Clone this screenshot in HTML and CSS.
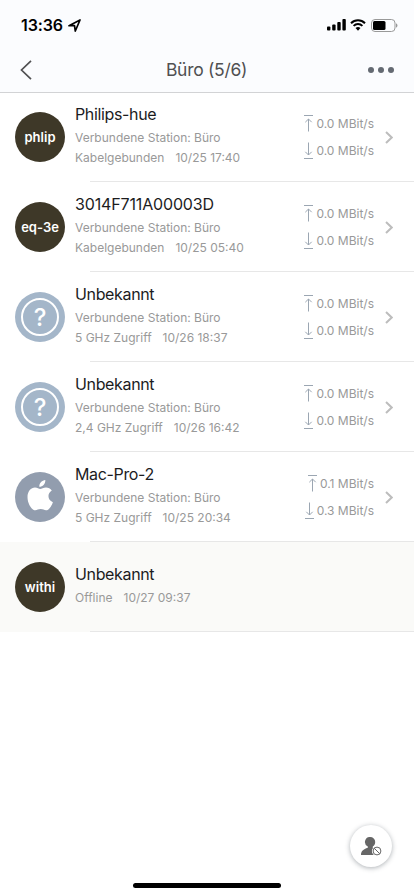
FILE: index.html
```html
<!DOCTYPE html>
<html lang="de">
<head>
<meta charset="utf-8">
<meta name="viewport" content="width=device-width, initial-scale=1">
<title>Büro</title>
<link rel="stylesheet" href="styles.css">
</head>
<body>
<svg class="defs" aria-hidden="true">
  <symbol id="up" viewBox="0 0 9 17"><path d="M0 .5h9M4.500 16.500V4M1.300 7.200l3.200-3.200 3.200 3.200"/></symbol>
  <symbol id="down" viewBox="0 0 9 17"><path d="M0 16.500h9M4.500 .5v12.500M1.300 9.800l3.200 3.200 3.200-3.200"/></symbol>
  <symbol id="chevron" viewBox="0 0 8 13"><path d="M1 1l5.700 5.500L1 12"/></symbol>
</svg>
<div class="screen">
  <header class="header">
    <div class="status">
      <span class="time">13:36</span>
      <svg class="location" viewBox="0 0 13 13"><path d="M1 6.700L12 1 7.300 12 6.500 6.700z"/></svg>
      <svg class="signal" viewBox="0 0 19 12"><rect x="0" y="7.500" width="3.400" height="4" rx=".9"/><rect x="5.200" y="5.500" width="3.400" height="6" rx=".9"/><rect x="10.300" y="3" width="3.400" height="8.500" rx=".9"/><rect x="15.400" y="0" width="3.400" height="11.500" rx=".9"/></svg>
      <svg class="wifi" viewBox="0 0 16 12"><path d="M1 4.200a10 10 0 0 1 14 0M3.600 6.900a6.300 6.300 0 0 1 8.800 0"/><path class="solid" d="M5.500 9.100a3.700 3.700 0 0 1 5 0L8 11.700z"/></svg>
      <svg class="battery" viewBox="0 0 27 13"><rect class="shell" x=".5" y=".5" width="23.500" height="12" rx="3.500"/><rect x="2" y="2" width="12.500" height="9" rx="1.500"/><path class="tip" d="M25 4.300c2 .8 2 3.600 0 4.400z"/></svg>
    </div>
    <nav class="nav">
      <svg class="back" viewBox="0 0 12 20"><path d="M11 .8L1.500 10 11 19.200"/></svg>
      <h1>Büro (5/6)</h1>
      <svg class="more" viewBox="0 0 26 6"><circle cx="3" cy="3" r="3"/><circle cx="13" cy="3" r="3"/><circle cx="23" cy="3" r="3"/></svg>
    </nav>
  </header>

  <main>
    <section class="row">
      <div class="avatar dark">phlip</div>
      <div class="info"><h2>Philips-hue</h2><p>Verbundene Station: Büro</p><p><span>Kabelgebunden</span><span>10/25 17:40</span></p></div>
      <div class="rates"><div><svg><use href="#up"/></svg>0.0 MBit/s</div><div><svg><use href="#down"/></svg>0.0 MBit/s</div></div>
      <svg class="chevron"><use href="#chevron"/></svg>
    </section>
    <section class="row">
      <div class="avatar dark">eq-3e</div>
      <div class="info"><h2 class="serial">3014F711A00003D</h2><p>Verbundene Station: Büro</p><p><span>Kabelgebunden</span><span>10/25 05:40</span></p></div>
      <div class="rates"><div><svg><use href="#up"/></svg>0.0 MBit/s</div><div><svg><use href="#down"/></svg>0.0 MBit/s</div></div>
      <svg class="chevron"><use href="#chevron"/></svg>
    </section>
    <section class="row">
      <div class="avatar unknown"><span>?</span></div>
      <div class="info"><h2>Unbekannt</h2><p>Verbundene Station: Büro</p><p><span>5 GHz Zugriff</span><span>10/26 18:37</span></p></div>
      <div class="rates"><div><svg><use href="#up"/></svg>0.0 MBit/s</div><div><svg><use href="#down"/></svg>0.0 MBit/s</div></div>
      <svg class="chevron"><use href="#chevron"/></svg>
    </section>
    <section class="row">
      <div class="avatar unknown"><span>?</span></div>
      <div class="info"><h2>Unbekannt</h2><p>Verbundene Station: Büro</p><p><span>2,4 GHz Zugriff</span><span>10/26 16:42</span></p></div>
      <div class="rates"><div><svg><use href="#up"/></svg>0.0 MBit/s</div><div><svg><use href="#down"/></svg>0.0 MBit/s</div></div>
      <svg class="chevron"><use href="#chevron"/></svg>
    </section>
    <section class="row">
      <div class="avatar mac"><svg viewBox="0 0 26 31"><path d="M18.300 0c.3 3.700-2.600 6.900-6 6.800C12 3.400 15 .3 18.300 0zM13.200 8.900c1.500 0 3.200-1.500 5.800-1.500 2.300 0 4.500 1.200 5.800 3.100-5 2.900-4.200 9.800 1.100 11.700-1 3.200-3.800 8.100-6.800 8.100-2.100 0-2.900-1.200-5.400-1.200-2.600 0-3.400 1.200-5.400 1.200C4.700 30.300.5 23.500.5 17.200c0-6 3.600-9.700 7.500-9.700 2.300 0 3.900 1.400 5.200 1.400z"/></svg></div>
      <div class="info"><h2>Mac-Pro-2</h2><p>Verbundene Station: Büro</p><p><span>5 GHz Zugriff</span><span>10/25 20:34</span></p></div>
      <div class="rates"><div><svg><use href="#up"/></svg>0.1 MBit/s</div><div><svg><use href="#down"/></svg>0.3 MBit/s</div></div>
      <svg class="chevron"><use href="#chevron"/></svg>
    </section>
    <section class="row offline">
      <div class="avatar dark">withi</div>
      <div class="info"><h2>Unbekannt</h2><p><span>Offline</span><span>10/27 09:37</span></p></div>
    </section>
  </main>

  <button class="fab" aria-label="Blockierte Geräte"><svg viewBox="0 0 21 19"><path d="M9.200 0a5 5 0 0 1 5 5c0 2-1 3.600-2.400 4.500v1.500l3 1v6H0c0-3.800 2.300-5.800 6.800-7.200V9.500A5 5 0 0 1 9.200 0z"/><circle class="halo" cx="16" cy="14" r="5.100"/><circle class="ban" cx="16" cy="14" r="3.900"/><path class="ban" d="M13.200 11.200l5.600 5.600"/></svg></button>
  <div class="home"></div>
</div>
</body>
</html>
```
FILE: styles.css
```css
* { box-sizing: border-box; }
body { margin: 0; background: #fff; font-family: Inter, "Liberation Sans", sans-serif; }
h1, h2, p { margin: 0; font-weight: 400; }
.defs { position: absolute; width: 0; height: 0; }
.screen { width: 414px; height: 896px; position: relative; overflow: hidden; }

.header { height: 92px; background: #fbfcfe; box-shadow: 0 1px #d2d3d5; position: relative; }
.status { height: 48px; padding: 2px 16px 0 21px; display: flex; align-items: center; }
.time { width: 43px; font-size: 16px; font-weight: 600; letter-spacing: -.1px; color: #000; white-space: nowrap; }
.location { width: 13px; height: 13px; margin-left: 4px; fill: none; stroke: #000; stroke-width: 1.7; stroke-linejoin: round; }
.signal { width: 19px; height: 12px; margin-left: auto; }
.wifi { width: 16px; height: 12px; margin-left: 4px; fill: none; stroke: #000; stroke-width: 2; }
.wifi .solid { fill: #000; stroke: none; }
.battery { width: 27px; height: 13px; margin-left: 5px; }
.shell { fill: none; stroke: #999; }
.tip { fill: #999; }
.nav { height: 44px; padding: 0 20px; display: flex; align-items: center; justify-content: space-between; }
.nav h1 { font-size: 17.5px; line-height: 44px; letter-spacing: -.3px; color: #505052; }
.back { width: 12px; height: 20px; margin-right: 13px; fill: none; stroke: #505052; stroke-width: 1.7; }
.more { width: 26px; height: 6px; fill: #646a72; }

.row { height: 90px; padding: 0 21px 0 15px; display: flex; align-items: center;
  background: linear-gradient(#e7e7e7, #e7e7e7) 90px 100% / 324px 1px no-repeat; }
.avatar { width: 50px; height: 50px; flex: none; border-radius: 50%; display: flex; align-items: center; justify-content: center; color: #fff; }
.dark { background: #3e3828; font-size: 13px; font-weight: 600; }
.unknown { background: #a4b6c9; }
.unknown span { width: 38px; height: 38px; border: 2px solid #fff; border-radius: 50%; font-size: 24px; font-weight: 500; line-height: 35px; text-align: center; }
.mac { background: #929dae; }
.mac svg { width: 26px; height: 31px; fill: #fff; margin-top: -4px; }
.info { margin-left: 10px; padding-bottom: 5px; flex: 1; white-space: nowrap; }
.info h2 { font-size: 16px; line-height: 24px; letter-spacing: -.35px; color: #1c1c1e; padding-bottom: 2px; }
.info .serial { letter-spacing: -.15px; }
.info p { font-size: 12px; line-height: 20px; color: #999; }
.info p span + span { margin-left: 11px; }
.rates { display: flex; flex-direction: column; align-items: flex-end; gap: 7px; font-size: 12px; line-height: 20px; color: #999; white-space: nowrap; }
.rates div { display: flex; align-items: center; }
.rates svg { width: 9px; height: 17px; margin-right: 3px; fill: none; stroke: #9ba6b2; stroke-width: 1; }
.chevron { width: 8px; height: 13px; margin-left: 11px; fill: none; stroke: #bdbdbd; stroke-width: 2; }
.offline { background-color: #fafaf8; }
.offline .info { padding-bottom: 4px; }
.offline .info h2 { padding-bottom: 1px; }
.offline .info p { line-height: 22px; }

.fab { position: absolute; left: 350px; top: 825px; width: 42px; height: 42px; padding: 0; border: 0; border-radius: 50%; background: #fff; box-shadow: 0 1px 5px rgba(50, 60, 70, .4); display: flex; align-items: center; justify-content: center; }
.fab svg { width: 21px; height: 19px; fill: #666; }
.fab .halo { fill: #fff; }
.fab .ban { fill: none; stroke: #666; stroke-width: 1; }
.home { position: absolute; left: 133px; top: 883px; width: 148px; height: 5px; border-radius: 3px; background: #000; }
```
